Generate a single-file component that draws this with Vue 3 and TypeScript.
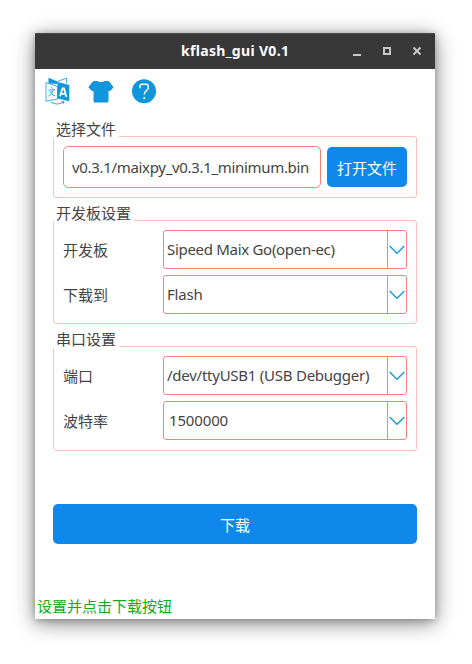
<script setup lang="ts">
import { ref } from 'vue'

interface Field {
  label: string
  value: string
  kind: string
}
interface Group {
  title: string
  kind: string
  fields: Field[]
}

const file = ref('v0.3.1/maixpy_v0.3.1_minimum.bin')
const groups: Group[] = [
  {
    title: '开发板设置',
    kind: 'board-group',
    fields: [
      { label: '开发板', value: 'Sipeed Maix Go(open-ec)', kind: 'board' },
      { label: '下载到', value: 'Flash', kind: 'target' },
    ],
  },
  {
    title: '串口设置',
    kind: 'serial-group',
    fields: [
      { label: '端口', value: '/dev/ttyUSB1 (USB Debugger)', kind: 'port' },
      { label: '波特率', value: '1500000', kind: 'baud' },
    ],
  },
]
</script>

<template>
  <div class="desktop">
    <main class="window">
      <header class="titlebar">
        <span class="caption">kflash_gui V0.1</span>
        <svg class="controls" width="72" height="12" viewBox="0 0 72 12">
          <rect x="1" y="8" width="8" height="2" fill="#c8c8c8" />
          <rect x="32" y="2" width="6" height="6" fill="none" stroke="#c8c8c8" stroke-width="2" />
          <path d="M61.5 1.5 68.5 8.5M68.5 1.5 61.5 8.5" stroke="#c8c8c8" stroke-width="2" />
        </svg>
      </header>

      <nav class="toolbar">
        <svg width="26" height="28" viewBox="0 0 26 28">
          <path d="M3.5 .8 12.5 4.5V7L3.5 6.5Z" fill="#1296db" />
          <path d="M12.5 4.4 21.6 1V6.5" fill="none" stroke="#1296db" stroke-width=".8" />
          <path d="M1 5.5 12.5 9.5V22L1 24.2Z" fill="#fff" stroke="#1296db" stroke-width=".8" />
          <path d="M12.5 9.3V5L24.3 8V24.3L12.5 21.6Z" fill="#1296db" />
          <path d="M15 19.2 17.5 11.4H19L21.4 20M16 16.9H20.4" fill="none" stroke="#fff" stroke-width="1.7" />
          <path d="M6.4 9.8 7.4 11.6M3.5 13.2 10 12.6M8.4 12.8Q7.4 17 3.4 19.2M5 14.4Q6.6 17.8 10.2 18.8" fill="none" stroke="#1296db" stroke-width=".9" />
          <path d="M6 25.2Q12.5 29 18.9 24.8M16.4 24.6 19.2 24.8 18.2 26.8" fill="none" stroke="#1296db" stroke-width=".9" />
        </svg>
        <svg width="26" height="28" viewBox="0 0 26 28">
          <path d="M6.2 3.9H9.2Q13 6 16.8 3.9H19.8Q20.6 3.9 21.2 4.4L25.3 9.8Q25.7 10.5 25 11.1L22.3 13.7Q21.5 14.3 20.5 13.8V24Q20.5 25.5 19 25.5H7Q5.5 25.5 5.5 24V13.8Q4.5 14.3 3.7 13.7L1 11.1Q.3 10.5.7 9.8L4.8 4.4Q5.4 3.9 6.2 3.9Z" fill="#1296db" />
        </svg>
        <svg width="26" height="28" viewBox="0 0 26 28">
          <circle cx="13" cy="14.3" r="12" fill="#1296db" />
          <path d="M8.9 11.3V9.2Q9 7.3 11 7.3H14.9Q17.3 7.3 17.3 9.5V10.9C17.3 13.4 13.2 13.7 13.2 17.5" fill="none" stroke="#fff" stroke-width="1.4" />
          <rect x="12.4" y="20" width="1.6" height="2" fill="#fff" />
        </svg>
      </nav>

      <div class="content">
        <section class="group file-group">
          <h2 class="legend">选择文件</h2>
          <div class="file-path">{{ file }}</div>
          <button class="button open" type="button">打开文件</button>
        </section>

        <section v-for="group in groups" :key="group.title" class="group" :class="group.kind">
          <h2 class="legend">{{ group.title }}</h2>
          <div v-for="field in group.fields" :key="field.label" class="row">
            <span class="label">{{ field.label }}</span>
            <div class="combo">
              <div class="value"><span :class="field.kind">{{ field.value }}</span></div>
              <span class="drop">
                <svg width="16" height="10" viewBox="0 0 16 10">
                  <path d="M.7 1 8 8.3 15.3 1" fill="none" stroke="#1296db" stroke-width="1.3" />
                </svg>
              </span>
            </div>
          </div>
        </section>

        <button class="button download" type="button">下载</button>
      </div>

      <footer class="status">设置并点击下载按钮</footer>
    </main>
  </div>
</template>

<style>
body {
  background: #fff;
}
</style>

<style scoped>
* {
  box-sizing: border-box;
}
.desktop {
  width: 472px;
  height: 664px;
  padding: 33px 37px 45px 35px;
  overflow: hidden;
  font: 15px/20px "Noto Sans", "Noto Sans CJK SC", sans-serif;
  color: #444;
}
.window {
  display: flex;
  flex-direction: column;
  width: 400px;
  height: 586px;
  background: #fff;
  box-shadow: 0 4px 20px rgba(0, 0, 0, 0.48), 0 1px 7px rgba(0, 0, 0, 0.25);
}
.titlebar {
  display: flex;
  align-items: center;
  height: 36px;
  padding: 0 0 1px 146px;
  background: #383838;
  border-top: 1px solid #4a4a4a;
  border-radius: 1px 1px 0 0;
  color: #fff;
  font-size: 14px;
  font-weight: 700;
  letter-spacing: 0.33px;
  white-space: nowrap;
}
.caption {
  width: 171px;
}
.controls {
  flex: none;
  margin-top: 2px;
}
.toolbar {
  display: flex;
  gap: 17px;
  height: 49px;
  padding: 8px 9.5px 0;
}
.content {
  display: flex;
  flex-direction: column;
  gap: 22px;
  padding: 18px 18px 0;
}
.group {
  position: relative;
  display: flex;
  flex-direction: column;
  gap: 6px;
  padding: 9px;
  border: 1px solid #ffbfbf;
  border-radius: 3px;
}
.file-group {
  flex-direction: row;
  align-items: center;
  height: 62px;
}
.serial-group {
  padding-bottom: 10px;
}
.legend {
  position: absolute;
  top: -18px;
  left: 0;
  margin: 0;
  padding: 0 3px 0 2px;
  background: #fff;
  font-size: 15px;
  font-weight: 400;
  line-height: 20px;
}
.file-path {
  display: flex;
  flex: none;
  align-items: center;
  width: 258px;
  height: 42px;
  padding-left: 8px;
  border: 1px solid #ff7f7f;
  border-radius: 5px;
  letter-spacing: -0.32px;
  white-space: nowrap;
}
.button {
  height: 40px;
  padding: 2px 0 0;
  border: 0;
  border-radius: 5px;
  background: #0f88eb;
  color: #fff;
  font: inherit;
}
.open {
  width: 80px;
}
.row {
  display: flex;
  align-items: center;
  height: 39px;
}
.label {
  width: 100px;
}
.combo {
  display: flex;
  width: 244px;
  height: 39px;
  border: 1px solid #ff7f7f;
  border-radius: 3px;
}
.value {
  width: 223px;
  padding: 8px 0 0 3px;
  overflow: hidden;
  white-space: nowrap;
}
.board {
  letter-spacing: -0.3px;
}
.target {
  letter-spacing: -0.2px;
}
.port {
  letter-spacing: -0.25px;
}
.baud {
  padding-left: 2px;
  letter-spacing: -0.15px;
}
.drop {
  display: flex;
  align-items: center;
  justify-content: center;
  width: 19px;
  border-left: 1px solid #ff7f7f;
}
.download {
  width: 364px;
  margin-top: 31px;
}
.status {
  margin-top: auto;
  padding: 0 2px 3px;
  color: #11aa22;
}
</style>
